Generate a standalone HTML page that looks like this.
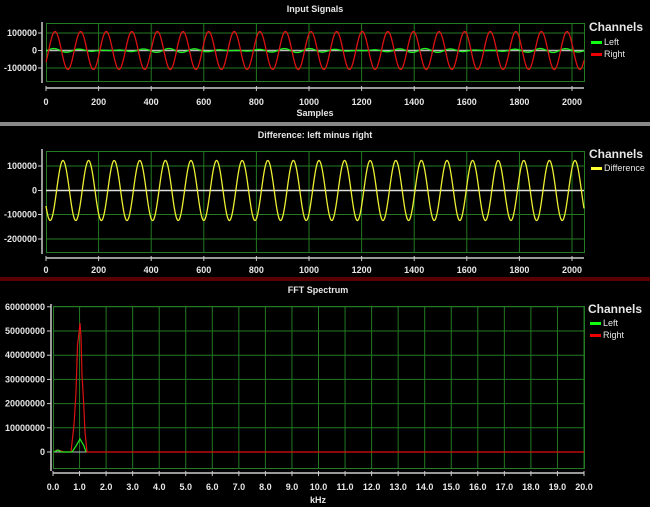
<!DOCTYPE html>
<html><head><meta charset="utf-8"><style>
html,body{margin:0;padding:0;background:#000;width:650px;height:507px;overflow:hidden}
svg{display:block}
text{font-family:"Liberation Sans",sans-serif;fill:#e6e6e6}
.t{font-size:9px;font-weight:bold}
.l{font-size:9px;font-weight:bold}
.m{font-size:9px}
.c{font-size:12px;font-weight:bold}
</style></head><body>
<svg id="s" width="650" height="507" viewBox="0 0 650 507" xmlns="http://www.w3.org/2000/svg">
<rect width="650" height="507" fill="#000"/>
<text class="t" x="315" y="12" text-anchor="middle">Input Signals</text>
<text class="t" x="315" y="116" text-anchor="middle">Samples</text>
<rect x="0" y="122" width="650" height="4" fill="#888"/>
<text class="t" x="315" y="138" text-anchor="middle">Difference: left minus right</text>
<rect x="0" y="277" width="650" height="4" fill="#5a0000"/>
<text class="t" x="318" y="293" text-anchor="middle">FFT Spectrum</text>
<text class="t" x="318" y="503" text-anchor="middle">kHz</text>

<text class="c" x="589" y="31">Channels</text>
<rect x="591" y="41" width="11" height="3" fill="#1f1"/><text class="m" x="604" y="45">Left</text>
<rect x="591" y="53" width="11" height="3" fill="#e00"/><text class="m" x="604" y="57">Right</text>

<text class="c" x="589" y="158">Channels</text>
<rect x="591" y="167" width="11" height="3" fill="#ff3"/><text class="m" x="604" y="171">Difference</text>

<text class="c" x="588" y="313">Channels</text>
<rect x="590" y="322" width="11" height="3" fill="#1f1"/><text class="m" x="603" y="326">Left</text>
<rect x="590" y="334" width="11" height="3" fill="#e00"/><text class="m" x="603" y="338">Right</text>
<g id="g"></g>
</svg>
<script>
var g=document.getElementById('g'),h='';
function L(x1,y1,x2,y2,c,w){h+='<line x1="'+x1+'" y1="'+y1+'" x2="'+x2+'" y2="'+y2+'" stroke="'+c+'" stroke-width="'+(w||1)+'"/>';}
function T(x,y,s,a){h+='<text class="l" x="'+x+'" y="'+y+'" text-anchor="'+(a||'middle')+'">'+s+'</text>';}
function P(pts,c,w){h+='<polyline fill="none" stroke="'+c+'" stroke-width="'+(w||1)+'" points="'+pts.join(' ')+'"/>';}
var GR='#227a22',AX='#ccc';
var x0=46,x1=584,sx=(572-46)/2000;
h+='<rect x="46.5" y="23.5" width="538" height="58" fill="none" stroke="'+GR+'"/>';
for(var i=200;i<=2000;i+=200){L(46+i*sx,24,46+i*sx,81,GR);L(46+i*sx,86,46+i*sx,91,AX);T(46+i*sx,105,i);}
L(46,86,46,91,AX);T(46,105,0);
L(46,33,584,33,GR);L(46,68,584,68,GR);
L(42,22,42,83,AX,1.5);L(46,88,584,88,AX,1.5);
[[33,'100000'],[50.5,'0'],[68,'-100000']].forEach(function(a){L(38,a[0],42,a[0],AX);T(37,a[0]+3,a[1],'end');});
L(46,50.5,584,50.5,'#bbb',1.5);
var r=[],gr=[],P1=25.6;
for(var x=46;x<=584;x+=0.5){var ph=2*Math.PI*(x-46)/P1-0.65;r.push(x+','+(50.5-19*Math.sin(ph)).toFixed(2));gr.push(x+','+(50.5-2*Math.sin(ph+0.3)*Math.cos((x-46)/40)).toFixed(2));}
P(gr,'#2e2',1.3);P(r,'#d11',1.3);
h+='<rect x="46.5" y="151.5" width="538" height="101" fill="none" stroke="'+GR+'"/>';
for(var i=200;i<=2000;i+=200){L(46+i*sx,152,46+i*sx,252,GR);L(46+i*sx,256,46+i*sx,261,AX);T(46+i*sx,273,i);}
L(46,256,46,261,AX);T(46,273,0);
[[166,'100000'],[214.5,'-100000'],[239,'-200000']].forEach(function(a){L(46,a[0],584,a[0],GR);});
L(42,149,42,254,AX,1.5);L(46,258,584,258,AX,1.5);
[[166,'100000'],[190.5,'0'],[214.5,'-100000'],[239,'-200000']].forEach(function(a){L(38,a[0],42,a[0],AX);T(37,a[0]+3,a[1],'end');});
L(46,190.5,584,190.5,'#ddd',1.5);
var y=[];
for(var x=46;x<=584;x+=0.5){var ph=2*Math.PI*(x-46)/P1-2.6;y.push(x+','+(190.5-30*Math.sin(ph)).toFixed(2));}
P(y,'#ee3',1.3);
var fx=(584-53)/20;
h+='<rect x="53.5" y="306.5" width="531" height="162" fill="none" stroke="'+GR+'"/>';
for(var i=0;i<=20;i++){var xx=53+i*fx;if(i>0)L(xx,307,xx,468,GR);L(xx,471,xx,476,AX);T(xx,490,i.toFixed(1));}
for(var k=0;k<=6;k++){var yy=452-k*24.2;if(k>0)L(54,yy,584,yy,GR);L(47,yy,51,yy,AX);T(45,yy+3,k==0?'0':(k*10000000),'end');}
L(51,304,51,471,AX,1.5);L(53,473,584,473,AX,1.5);
L(54,452,584,452,'#bbb',1);
P(['54,452','57,450','61,451','64,452','71,452','74,425','76,392','77.5,345','79,333','80,323','81,337','82,375','83.5,400','85,432','87,452','584,452'],'#d11',1.2);
P(['54,452','58,450','61,452','72,452','76,446','80,439','84,446','86,452'],'#2e2',1.2);
g.innerHTML=h;
</script>
</body></html>
